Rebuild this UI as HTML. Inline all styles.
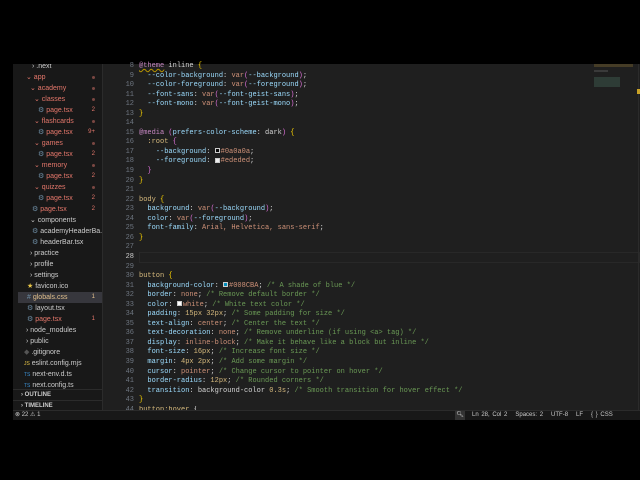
<!DOCTYPE html>
<html><head><meta charset="utf-8"><style>
*{margin:0;padding:0;box-sizing:border-box}
body{width:640px;height:480px;background:#000;overflow:hidden;position:relative;font-family:"Liberation Sans",sans-serif}
#win{position:absolute;left:13px;top:64px;width:627px;height:356px;background:#1f1f1f}
#side{position:absolute;left:0;top:0;width:90px;height:346px;background:#181818;border-right:1px solid #2b2b2b;overflow:hidden}
.r{position:absolute;height:11px;line-height:11px;font-size:7px;color:#ccc;white-space:nowrap}
.m{color:#e4776b}
.b{position:absolute;right:8px;font-size:6px}
.dot{position:absolute;right:8px;top:4px;width:3px;height:3px;border-radius:50%;background:#7a4742}
#code{position:absolute;left:91px;top:0;right:0;height:346px;font-family:"Liberation Mono",monospace;font-size:7px}
.l{position:absolute;left:0;height:9.54px;line-height:9.54px;white-space:pre;width:100%}
.n{display:inline-block;width:30px;text-align:right;color:#6e7681;margin-right:5px}
.s{color:#d7ba7d}.p{color:#9cdcfe}.v{color:#ce9178}.c{color:#6a9955}.w{color:#d4d4d4}.y{color:#ffd700}.pu{color:#da70d6}.k{color:#c586c0}
#status{position:absolute;left:0;top:346px;width:627px;height:10px;background:#181818;border-top:1px solid #2b2b2b;font-size:6px;color:#ccc;line-height:9px}
.sw{display:inline-block;width:5px;height:5px;vertical-align:-0.5px;margin-right:1px;border:0.5px solid #ccc}
</style></head><body>
<div id="win">
<div id="side">
<div class="r" style="top:-3px;left:19px">› .next</div>
<div class="r m" style="top:8px;left:13px;width:77px">⌄ app<span class="dot"></span></div>
<div class="r m" style="top:19px;left:17px;width:73px">⌄ academy<span class="dot"></span></div>
<div class="r m" style="top:30px;left:21px;width:69px">⌄ classes<span class="dot"></span></div>
<div class="r m" style="top:41px;left:25px;width:65px"><span style="color:#6d8ca3">⚙</span> page.tsx<span class="b">2</span></div>
<div class="r m" style="top:52px;left:21px;width:69px">⌄ flashcards<span class="dot"></span></div>
<div class="r m" style="top:63px;left:25px;width:65px"><span style="color:#6d8ca3">⚙</span> page.tsx<span class="b">9+</span></div>
<div class="r m" style="top:74px;left:21px;width:69px">⌄ games<span class="dot"></span></div>
<div class="r m" style="top:85px;left:25px;width:65px"><span style="color:#6d8ca3">⚙</span> page.tsx<span class="b">2</span></div>
<div class="r m" style="top:96px;left:21px;width:69px">⌄ memory<span class="dot"></span></div>
<div class="r m" style="top:107px;left:25px;width:65px"><span style="color:#6d8ca3">⚙</span> page.tsx<span class="b">2</span></div>
<div class="r m" style="top:118px;left:21px;width:69px">⌄ quizzes<span class="dot"></span></div>
<div class="r m" style="top:129px;left:25px;width:65px"><span style="color:#6d8ca3">⚙</span> page.tsx<span class="b">2</span></div>
<div class="r m" style="top:140px;left:19px;width:71px"><span style="color:#6d8ca3">⚙</span> page.tsx<span class="b">2</span></div>
<div class="r" style="top:151px;left:17px">⌄ components</div>
<div class="r" style="top:162px;left:19px"><span style="color:#6d8ca3">⚙</span> academyHeaderBa...</div>
<div class="r" style="top:173px;left:19px"><span style="color:#6d8ca3">⚙</span> headerBar.tsx</div>
<div class="r" style="top:184px;left:17px">› practice</div>
<div class="r" style="top:195px;left:17px">› profile</div>
<div class="r" style="top:206px;left:17px">› settings</div>
<div class="r" style="top:217px;left:14px"><span style="color:#e8c547">★</span> favicon.ico</div>
<div class="r" style="top:228px;left:5px;width:85px;background:#37373d;padding-left:9px;color:#e2c08d"><span style="color:#6d8ca3">#</span> globals.css<span class="b">1</span></div>
<div class="r" style="top:239px;left:14px"><span style="color:#6d8ca3">⚙</span> layout.tsx</div>
<div class="r m" style="top:250px;left:14px;width:76px"><span style="color:#6d8ca3">⚙</span> page.tsx<span class="b">1</span></div>
<div class="r" style="top:261px;left:13px">› node_modules</div>
<div class="r" style="top:272px;left:13px">› public</div>
<div class="r" style="top:283px;left:11px"><span style="color:#555">◆</span> .gitignore</div>
<div class="r" style="top:294px;left:11px"><span style="color:#e8c547;font-size:5px">JS</span> eslint.config.mjs</div>
<div class="r" style="top:305px;left:11px"><span style="color:#3b8ed0;font-size:5px">TS</span> next-env.d.ts</div>
<div class="r" style="top:316px;left:11px"><span style="color:#3b8ed0;font-size:5px">TS</span> next.config.ts</div>
<div class="r" style="top:325px;left:0;width:90px;background:#181818;border-top:1px solid #2b2b2b;padding-left:8px;font-weight:bold;font-size:6px">› OUTLINE</div>
<div class="r" style="top:336px;left:0;width:90px;background:#181818;border-top:1px solid #2b2b2b;padding-left:8px;font-weight:bold;font-size:6px">› TIMELINE</div>
</div>
<div id="code">
<div class="l" style="top:-2px"><span class="n">8</span><span class="k" style="text-decoration:underline wavy #b89500">@theme</span><span class="w"> inline </span><span class="y">{</span></div>
<div class="l" style="top:7.5px"><span class="n">9</span>  <span class="p">--color-background</span><span class="w">: </span><span class="v">var</span><span class="pu">(</span><span class="p">--background</span><span class="pu">)</span><span class="w">;</span></div>
<div class="l" style="top:17px"><span class="n">10</span>  <span class="p">--color-foreground</span><span class="w">: </span><span class="v">var</span><span class="pu">(</span><span class="p">--foreground</span><span class="pu">)</span><span class="w">;</span></div>
<div class="l" style="top:26.6px"><span class="n">11</span>  <span class="p">--font-sans</span><span class="w">: </span><span class="v">var</span><span class="pu">(</span><span class="p">--font-geist-sans</span><span class="pu">)</span><span class="w">;</span></div>
<div class="l" style="top:36.1px"><span class="n">12</span>  <span class="p">--font-mono</span><span class="w">: </span><span class="v">var</span><span class="pu">(</span><span class="p">--font-geist-mono</span><span class="pu">)</span><span class="w">;</span></div>
<div class="l" style="top:45.7px"><span class="n">13</span><span class="y">}</span></div>
<div class="l" style="top:55.2px"><span class="n">14</span></div>
<div class="l" style="top:64.8px"><span class="n">15</span><span class="k">@media</span><span class="w"> </span><span class="pu">(</span><span class="p">prefers-color-scheme</span><span class="w">: dark</span><span class="pu">)</span><span class="w"> </span><span class="y">{</span></div>
<div class="l" style="top:74.3px"><span class="n">16</span>  <span class="s">:root</span><span class="w"> </span><span class="pu">{</span></div>
<div class="l" style="top:83.9px"><span class="n">17</span>    <span class="p">--background</span><span class="w">: </span><span class="sw" style="background:#0a0a0a"></span><span class="v">#0a0a0a</span><span class="w">;</span></div>
<div class="l" style="top:93.4px"><span class="n">18</span>    <span class="p">--foreground</span><span class="w">: </span><span class="sw" style="background:#ededed"></span><span class="v">#ededed</span><span class="w">;</span></div>
<div class="l" style="top:103px"><span class="n">19</span>  <span class="pu">}</span></div>
<div class="l" style="top:112.5px"><span class="n">20</span><span class="y">}</span></div>
<div class="l" style="top:122px"><span class="n">21</span></div>
<div class="l" style="top:131.6px"><span class="n">22</span><span class="s">body</span><span class="w"> </span><span class="y">{</span></div>
<div class="l" style="top:141.2px"><span class="n">23</span>  <span class="p">background</span><span class="w">: </span><span class="v">var</span><span class="pu">(</span><span class="p">--background</span><span class="pu">)</span><span class="w">;</span></div>
<div class="l" style="top:150.7px"><span class="n">24</span>  <span class="p">color</span><span class="w">: </span><span class="v">var</span><span class="pu">(</span><span class="p">--foreground</span><span class="pu">)</span><span class="w">;</span></div>
<div class="l" style="top:160.3px"><span class="n">25</span>  <span class="p">font-family</span><span class="w">: </span><span class="v">Arial, Helvetica, sans-serif</span><span class="w">;</span></div>
<div class="l" style="top:169.8px"><span class="n">26</span><span class="y">}</span></div>
<div class="l" style="top:179.4px"><span class="n">27</span></div>
<div style="position:absolute;left:35px;right:0;top:188.4px;height:10.5px;border:1px solid #282828"></div>
<div class="l" style="top:188.9px"><span class="n" style="color:#ccc">28</span></div>
<div class="l" style="top:198.5px"><span class="n">29</span></div>
<div class="l" style="top:208px"><span class="n">30</span><span class="s">button</span><span class="w"> </span><span class="y">{</span></div>
<div class="l" style="top:217.6px"><span class="n">31</span>  <span class="p">background-color</span><span class="w">: </span><span class="sw" style="background:#008cba"></span><span class="v">#008CBA</span><span class="w">; </span><span class="c">/* A shade of blue */</span></div>
<div class="l" style="top:227.1px"><span class="n">32</span>  <span class="p">border</span><span class="w">: </span><span class="v">none</span><span class="w">; </span><span class="c">/* Remove default border */</span></div>
<div class="l" style="top:236.7px"><span class="n">33</span>  <span class="p">color</span><span class="w">: </span><span class="sw" style="background:#fff"></span><span class="v">white</span><span class="w">; </span><span class="c">/* White text color */</span></div>
<div class="l" style="top:246.2px"><span class="n">34</span>  <span class="p">padding</span><span class="w">: </span><span class="s">15px 32px</span><span class="w">; </span><span class="c">/* Some padding for size */</span></div>
<div class="l" style="top:255.8px"><span class="n">35</span>  <span class="p">text-align</span><span class="w">: </span><span class="v">center</span><span class="w">; </span><span class="c">/* Center the text */</span></div>
<div class="l" style="top:265.3px"><span class="n">36</span>  <span class="p">text-decoration</span><span class="w">: </span><span class="v">none</span><span class="w">; </span><span class="c">/* Remove underline (if using &lt;a&gt; tag) */</span></div>
<div class="l" style="top:274.9px"><span class="n">37</span>  <span class="p">display</span><span class="w">: </span><span class="v">inline-block</span><span class="w">; </span><span class="c">/* Make it behave like a block but inline */</span></div>
<div class="l" style="top:284.4px"><span class="n">38</span>  <span class="p">font-size</span><span class="w">: </span><span class="s">16px</span><span class="w">; </span><span class="c">/* Increase font size */</span></div>
<div class="l" style="top:294px"><span class="n">39</span>  <span class="p">margin</span><span class="w">: </span><span class="s">4px 2px</span><span class="w">; </span><span class="c">/* Add some margin */</span></div>
<div class="l" style="top:303.5px"><span class="n">40</span>  <span class="p">cursor</span><span class="w">: </span><span class="v">pointer</span><span class="w">; </span><span class="c">/* Change cursor to pointer on hover */</span></div>
<div class="l" style="top:313.1px"><span class="n">41</span>  <span class="p">border-radius</span><span class="w">: </span><span class="s">12px</span><span class="w">; </span><span class="c">/* Rounded corners */</span></div>
<div class="l" style="top:322.6px"><span class="n">42</span>  <span class="p">transition</span><span class="w">: background-color </span><span class="s">0.3s</span><span class="w">; </span><span class="c">/* Smooth transition for hover effect */</span></div>
<div class="l" style="top:332.2px"><span class="n">43</span><span class="y">}</span></div>
<div class="l" style="top:341.7px;height:4px;overflow:hidden"><span class="n">44</span><span class="s">button:hover</span><span class="w"> {</span></div>
<div style="position:absolute;left:490px;top:0;width:39px;height:36px;opacity:.5">
<div style="height:3px;background:#6b5a2e;margin-bottom:3px"></div>
<div style="height:2px;width:14px;background:#555;margin-bottom:5px"></div>
<div style="height:10px;width:26px;background:#3d5a4e"></div></div>
<div style="position:absolute;right:1px;top:0;width:1px;height:346px;background:#2b2b2b"></div>
<div style="position:absolute;right:0;top:25px;width:3px;height:5px;background:#c9a227"></div>
</div>
<div id="status">
<span style="position:absolute;left:2px">⊗ 22 ⚠ 1</span>
<span style="position:absolute;left:442px;width:10px;background:#333;text-align:center">🔍︎</span>
<span style="position:absolute;left:459px;word-spacing:1px">Ln 28, Col 2 &nbsp; Spaces: 2 &nbsp; UTF-8 &nbsp; LF &nbsp; { } CSS</span>
</div>
</div>
</body></html>
